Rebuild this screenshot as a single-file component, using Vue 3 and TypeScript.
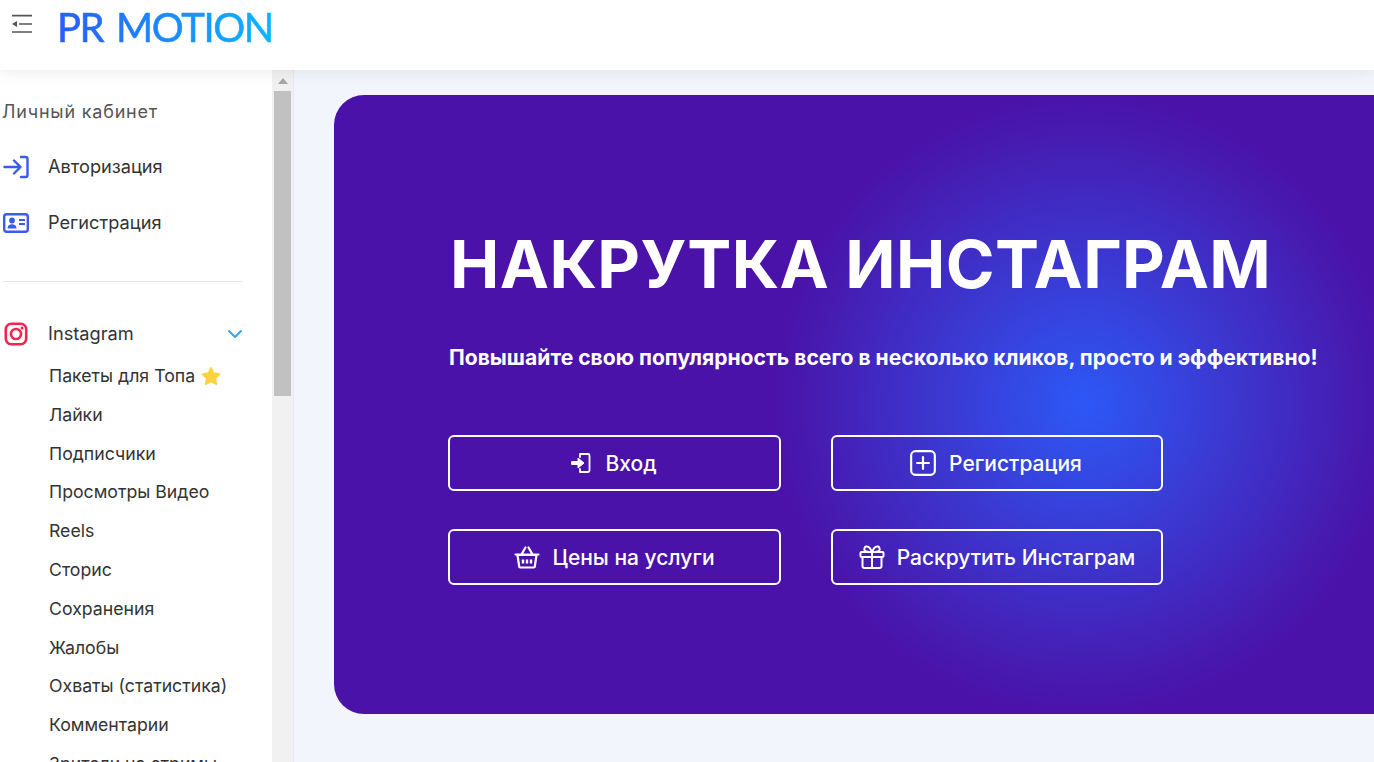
<script setup lang="ts">
const items: string[] = ['Лайки','Подписчики','Просмотры Видео','Reels','Сторис','Сохранения','Жалобы','Охваты (статистика)','Комментарии','Зрители на стримы']
</script>

<template>
  <div class="page">
    <header class="top">
      <svg class="burger" viewBox="0 0 22 20" width="22" height="20" fill="none" stroke="#555" stroke-width="1.6">
        <path d="M1 1.600h20M8 10h13M1 18h20"/>
        <path d="M1 10l5-3v6z" fill="#555" stroke="none"/>
      </svg>
      <div class="logo">PR MOTION</div>
    </header>
    <div class="body">
      <aside class="side">
        <nav class="menu">
          <div class="title">Личный кабинет</div>
          <a class="row first">
            <svg viewBox="0 0 26 24" width="26" height="24" fill="none" stroke="#3a5bef" stroke-width="2.4" stroke-linecap="round" stroke-linejoin="round"><path d="M1.500 12h15M11 5.500l6.500 6.500-6.500 6.500M18 2h4.500a2 2 0 0 1 2 2v16a2 2 0 0 1-2 2H18"/></svg>
            <span>Авторизация</span>
          </a>
          <a class="row second">
            <svg viewBox="0 0 26 20" width="26" height="20" fill="none"><rect x="1.200" y="1.200" width="23.600" height="17.600" rx="2.500" stroke="#3a5bef" stroke-width="2.400"/><circle cx="9" cy="7.500" r="2.900" fill="#3a5bef"/><path d="M4.500 15.500c0-2.800 2-4.200 4.500-4.200s4.500 1.400 4.500 4.200z" fill="#3a5bef"/><path d="M16 7h6M16 11h6" stroke="#3a5bef" stroke-width="2.200"/></svg>
            <span>Регистрация</span>
          </a>
          <div class="sep"></div>
          <a class="row insta">
            <svg viewBox="0 0 24 24" width="24" height="24" fill="none" stroke="#f5234f" stroke-width="2.600"><rect x="1.800" y="1.800" width="20.400" height="20.400" rx="5.500"/><circle cx="12" cy="12" r="5"/><circle cx="18" cy="6" r="1.500" fill="#f5234f" stroke="none"/></svg>
            <span>Instagram</span>
            <svg class="chev" viewBox="0 0 16 10" width="16" height="10" fill="none" stroke="#3aa0e8" stroke-width="2" stroke-linecap="round" stroke-linejoin="round"><path d="M2 2l6 6 6-6"/></svg>
          </a>
          <div class="sub">
            <a class="subitem">Пакеты для Топа
              <svg viewBox="0 0 24 24" width="20" height="20"><path d="M12 2.500l3 6.300 6.900 1-5 4.800 1.200 6.900-6.100-3.300-6.100 3.300 1.200-6.900-5-4.800 6.900-1z" fill="#ffd23f" stroke="#ffd23f" stroke-width="2.500" stroke-linejoin="round"/></svg>
            </a>
            <a v-for="t in items" :key="t" class="subitem">{{ t }}</a>
          </div>
        </nav>
        <div class="bar">
          <div class="arrow"></div>
          <div class="thumb"></div>
        </div>
      </aside>
      <main class="main">
        <section class="hero">
          <h1>НАКРУТКА ИНСТАГРАМ</h1>
          <p>Повышайте свою популярность всего в несколько кликов, просто и эффективно!</p>
          <div class="btns">
            <a class="btn top-btn">
              <svg viewBox="0 0 24 24" width="24" height="24" fill="none" stroke="#fff" stroke-width="1.800" stroke-linejoin="round" stroke-linecap="round"><path d="M11 3h8a1.500 1.500 0 0 1 1.500 1.500v15A1.500 1.500 0 0 1 19 21h-8M11 3v3M11 18v3"/><path d="M3 10.500h6V7l6 5-6 5v-3.500H3z" fill="#fff" stroke-width="1"/></svg>
              <span>Вход</span>
            </a>
            <a class="btn top-btn">
              <svg viewBox="0 0 26 26" width="28" height="28" fill="none" stroke="#fff" stroke-width="2" stroke-linecap="round"><rect x="2" y="2" width="22" height="22" rx="4"/><path d="M13 7.500v11M7.500 13h11"/></svg>
              <span>Регистрация</span>
            </a>
            <a class="btn">
              <svg viewBox="0 0 26 26" width="26" height="26" fill="none" stroke="#fff" stroke-width="2.200" stroke-linecap="round" stroke-linejoin="round"><path d="M1.500 10.500h23M8 9.500L11.500 3.500M18 9.500L14.500 3.500"/><path d="M3.500 11l1.700 11.500a1 1 0 0 0 1 1h13.600a1 1 0 0 0 1-1L22.500 11z"/><path d="M9 15.500v4M13 15.500v4M17 15.500v4" stroke-width="2.400" stroke-linecap="butt"/></svg>
              <span>Цены на услуги</span>
            </a>
            <a class="btn">
              <svg viewBox="0 0 26 26" width="26" height="26" fill="none" stroke="#fff" stroke-width="2" stroke-linejoin="round"><rect x="1.500" y="8" width="23" height="5" rx="1"/><path d="M3.500 13v9a2 2 0 0 0 2 2h15a2 2 0 0 0 2-2v-9M13 8v16"/><path d="M13 8c-2-5-4-6-6-5.500S5 6 6 7s3 1 7 1zM13 8c2-5 4-6 6-5.500s2 3.500 1 4.500-3 1-7 1z"/></svg>
              <span>Раскрутить Инстаграм</span>
            </a>
          </div>
        </section>
      </main>
    </div>
  </div>
</template>

<style>
html, body { margin: 0; overflow: hidden; background: #fff; }
</style>

<style scoped>
.page { width: 1374px; height: 762px; overflow: hidden; display: flex; flex-direction: column; font-family: Inter, "Noto Sans", sans-serif; color: #333; }
.top { height: 70px; flex: none; background: #fff; display: flex; align-items: flex-start; position: relative; z-index: 2; box-shadow: 0 2px 16px rgba(0,0,0,.08); }
.burger { margin: 14px 0 0 11px; }
.logo { margin: 4px 0 0 24px; font-family: Lato, Inter, sans-serif; font-size: 40px; line-height: 46px; font-weight: 400; letter-spacing: -1.4px; word-spacing: 4px; white-space: nowrap; background: linear-gradient(90deg, #2c5cf6 0%, #0bb6ff 100%); -webkit-background-clip: text; background-clip: text; color: transparent; -webkit-text-stroke: 0.6px transparent; }
.body { flex: 1; display: flex; min-height: 0; }
.side { width: 294px; flex: none; display: flex; background: #fff; border-right: 1px solid #e8e8ee; box-sizing: border-box; overflow: hidden; }
.menu { width: 272px; flex: none; padding: 30px 0 0 3px; box-sizing: border-box; overflow: hidden; }
.title { font-size: 18px; line-height: 24px; color: #555; letter-spacing: 0.8px; margin-left: -1px; }
.row { display: flex; align-items: center; gap: 19px; height: 28px; font-size: 18.200px; font-weight: 400; }
.row span { margin-top: -2px; }
.row svg { width: 26px; flex: none; }
.first { margin-top: 29px; }
.second { margin-top: 28px; }
.sep { width: 239px; height: 1px; background: #e6e6e6; margin: 44px 0 38px; }
.insta { position: relative; width: 240px; }
.insta .chev { width: 16px; margin-left: auto; }
.sub { padding-left: 46px; margin-top: 8.200px; }
.subitem { display: flex; align-items: center; gap: 6px; height: 38.800px; font-size: 17.700px; font-weight: 400; white-space: nowrap; }
.bar { width: 21px; flex: none; background: #f1f1f1; display: flex; flex-direction: column; align-items: center; }
.arrow { width: 0; height: 0; margin-top: 8px; border-left: 5px solid transparent; border-right: 5px solid transparent; border-bottom: 6px solid #a8a8a8; }
.thumb { width: 17px; height: 305px; background: #c1c1c1; margin-top: 7px; }
.main { flex: 1; min-width: 0; background: #f3f5fd; padding: 25px 0 0 40px; overflow: hidden; }
.hero { width: 1500px; height: 619px; box-sizing: border-box; padding: 129px 0 0 115px; border-radius: 30px; color: #fff; background: radial-gradient(circle 310px at 50% 50%, #2c58f6 0%, #3840da 35%, #4129c0 68%, #4a12a8 100%); }
h1 { margin: 0 0 0 1px; font-size: 66px; line-height: 80px; font-weight: 700; white-space: nowrap; letter-spacing: 0.4px; }
p { margin: 41px 0 0; font-size: 21.100px; line-height: 26px; font-weight: 700; white-space: nowrap; }
.btns { margin-top: 64px; margin-left: -1px; display: grid; grid-template-columns: 333px 332px; column-gap: 50px; row-gap: 38px; justify-content: start; }
.btn { height: 56px; box-sizing: border-box; border: 2px solid #fff; border-radius: 6px; display: flex; align-items: center; justify-content: center; gap: 12px; font-size: 21px; font-weight: 500; }
.top-btn { padding-right: 3px; }
</style>
